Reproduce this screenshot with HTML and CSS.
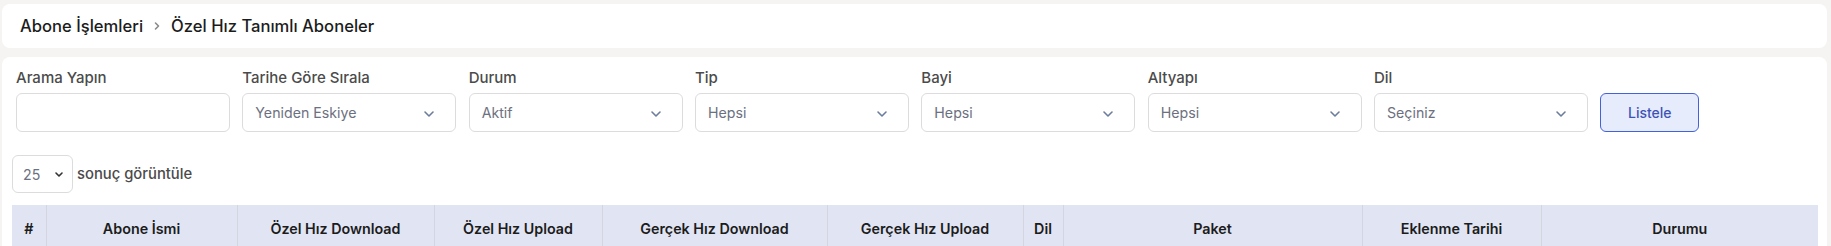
FILE: index.html
```html
<!DOCTYPE html>
<html lang="tr">
<head>
<meta charset="utf-8">
<title>Özel Hız Tanımlı Aboneler</title>
<link rel="stylesheet" href="styles.css">
</head>
<body>
<div class="page">
  <div class="card breadcrumb-card">
    <nav class="breadcrumb">
      <span class="crumb">Abone İşlemleri</span>
      <svg class="crumb-sep" width="8" height="10" viewBox="0 0 8 10"><path d="M2.5 2 L5.5 5 L2.5 8" fill="none" stroke="#8a8a8a" stroke-width="1.6" stroke-linecap="round" stroke-linejoin="round"/></svg>
      <span class="crumb">Özel Hız Tanımlı Aboneler</span>
    </nav>
  </div>
  <div class="card main-card">
    <div class="filters">
      <div class="field">
        <label class="field-label">Arama Yapın</label>
        <div class="control"></div>
      </div>
      <div class="field">
        <label class="field-label">Tarihe Göre Sırala</label>
        <div class="control select"><span>Yeniden Eskiye</span><svg class="chev" width="12" height="8" viewBox="0 0 12 8"><path d="M2 2 L6 6 L10 2" fill="none" stroke="#6b7c9c" stroke-width="1.6" stroke-linecap="round" stroke-linejoin="round"/></svg></div>
      </div>
      <div class="field">
        <label class="field-label">Durum</label>
        <div class="control select"><span>Aktif</span><svg class="chev" width="12" height="8" viewBox="0 0 12 8"><path d="M2 2 L6 6 L10 2" fill="none" stroke="#6b7c9c" stroke-width="1.6" stroke-linecap="round" stroke-linejoin="round"/></svg></div>
      </div>
      <div class="field">
        <label class="field-label">Tip</label>
        <div class="control select"><span>Hepsi</span><svg class="chev" width="12" height="8" viewBox="0 0 12 8"><path d="M2 2 L6 6 L10 2" fill="none" stroke="#6b7c9c" stroke-width="1.6" stroke-linecap="round" stroke-linejoin="round"/></svg></div>
      </div>
      <div class="field">
        <label class="field-label">Bayi</label>
        <div class="control select"><span>Hepsi</span><svg class="chev" width="12" height="8" viewBox="0 0 12 8"><path d="M2 2 L6 6 L10 2" fill="none" stroke="#6b7c9c" stroke-width="1.6" stroke-linecap="round" stroke-linejoin="round"/></svg></div>
      </div>
      <div class="field">
        <label class="field-label">Altyapı</label>
        <div class="control select"><span>Hepsi</span><svg class="chev" width="12" height="8" viewBox="0 0 12 8"><path d="M2 2 L6 6 L10 2" fill="none" stroke="#6b7c9c" stroke-width="1.6" stroke-linecap="round" stroke-linejoin="round"/></svg></div>
      </div>
      <div class="field">
        <label class="field-label">Dil</label>
        <div class="control select"><span>Seçiniz</span><svg class="chev" width="12" height="8" viewBox="0 0 12 8"><path d="M2 2 L6 6 L10 2" fill="none" stroke="#6b7c9c" stroke-width="1.6" stroke-linecap="round" stroke-linejoin="round"/></svg></div>
      </div>
      <div class="field field-btn">
        <button class="btn-list">Listele</button>
      </div>
    </div>

    <div class="length">
      <div class="length-select"><span>25</span><svg class="chev-sm" width="10" height="7" viewBox="0 0 10 7"><path d="M2 2 L5 5 L8 2" fill="none" stroke="#333" stroke-width="1.6" stroke-linecap="round" stroke-linejoin="round"/></svg></div>
      <span class="length-text">sonuç görüntüle</span>
    </div>

    <table class="data">
      <colgroup>
        <col class="c-no"><col class="c-name"><col class="c-odl"><col class="c-oul"><col class="c-gdl"><col class="c-gul"><col class="c-dil"><col class="c-pkt"><col class="c-date"><col class="c-st">
      </colgroup>
      <thead>
        <tr>
          <th>#</th>
          <th>Abone İsmi</th>
          <th>Özel Hız Download</th>
          <th>Özel Hız Upload</th>
          <th>Gerçek Hız Download</th>
          <th>Gerçek Hız Upload</th>
          <th>Dil</th>
          <th>Paket</th>
          <th>Eklenme Tarihi</th>
          <th>Durumu</th>
        </tr>
      </thead>
    </table>
  </div>
</div>
</body>
</html>
```

FILE: styles.css
```css
* { box-sizing: border-box; }
html, body { margin: 0; padding: 0; }
body {
  background: #f5f4f2;
  font-family: "Inter", "DejaVu Sans", sans-serif;
  color: #212529;
  overflow: hidden;
}
.page {
  padding: 4px 4px 0 2px;
  display: flex;
  flex-direction: column;
  gap: 9px;
}
.card {
  background: #fff;
  border-radius: 8px;
}
.breadcrumb-card {
  height: 44px;
  display: flex;
  align-items: center;
  padding-left: 18px;
}
.breadcrumb {
  display: flex;
  align-items: center;
  gap: 8px;
  font-size: 16.6px;
  font-weight: 500;
  color: #1c1c1c;
}
.crumb-sep { margin: 0 2px; }
.main-card {
  padding: 10px 9px 20px 10px;
}
.filters {
  display: grid;
  grid-template-columns: repeat(7, 214px) 99px;
  column-gap: 12.33px;
  padding-left: 4px;
  align-items: end;
}
.field-label {
  display: block;
  font-size: 15px;
  font-weight: 500;
  color: #4b4b4b;
  line-height: 22px;
  margin-bottom: 4px;
}
.control {
  height: 39px;
  border: 1px solid #dcdcdc;
  border-radius: 6px;
  background: #fff;
}
.select {
  display: flex;
  align-items: center;
  justify-content: space-between;
  padding: 0 20px 0 12px;
  font-size: 14.2px;
  color: #6c7080;
}
.select span { margin-top: -1px; }
.chev { margin-top: 2px; }
.btn-list {
  width: 99px;
  height: 39px;
  border: 1px solid #4361d8;
  background: #e7ecfd;
  color: #3d53b5;
  border-radius: 6px;
  font-family: inherit;
  font-size: 14px;
  font-weight: 500;
  padding: 0;
}
.length {
  display: flex;
  align-items: center;
  gap: 4px;
  margin-top: 23px;
}
.length-select {
  width: 61px;
  height: 38px;
  border: 1px solid #dcdcdc;
  border-radius: 6px;
  display: flex;
  align-items: center;
  justify-content: space-between;
  padding: 0 8px 0 10px;
  font-size: 14.2px;
  color: #6c7080;
}
.length-text {
  font-size: 14.8px;
  font-weight: 500;
  color: #4b4b4b;
}
.data {
  margin-top: 12px;
  width: 1806px;
  border-collapse: collapse;
  table-layout: fixed;
}
.data th {
  background: #e1e5f3;
  border: 1px solid #d3d6df;
  border-top: none;
  border-bottom: none;
  height: 46px;
  font-size: 14.3px;
  font-weight: 600;
  color: #1c1c1c;
  text-align: center;
  padding: 0 6px;
}
.data th:first-child { border-left: none; }
.data th:last-child { border-right: none; }
.c-no { width: 34px; }
.c-name { width: 191px; }
.c-odl { width: 197px; }
.c-oul { width: 168px; }
.c-gdl { width: 225px; }
.c-gul { width: 196px; }
.c-dil { width: 40px; }
.c-pkt { width: 299px; }
.c-date { width: 179px; }
.c-st { width: 277px; }
```
